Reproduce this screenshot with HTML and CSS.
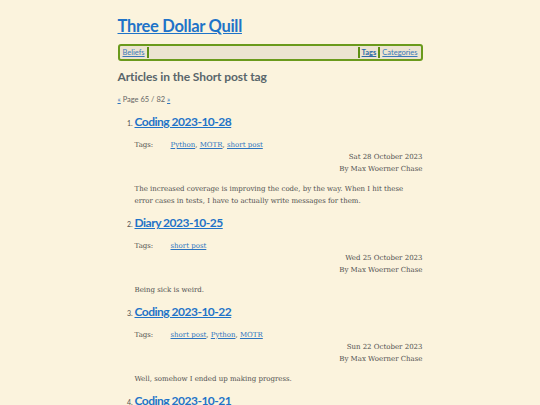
FILE: index.html
```html
<!DOCTYPE html>
<html>
<head>
<meta charset="utf-8">
<link rel="stylesheet" href="styles.css">
</head>
<body>
<div class="page">
  <header class="site-head">
    <h1 class="site-title"><a href="#">Three Dollar Quill</a></h1>
    <nav class="nav">
      <a href="#">Beliefs</a>
      <span class="sep"></span>
      <span class="spacer"></span>
      <span class="sep"></span>
      <a href="#" class="active">Tags</a>
      <span class="sep"></span>
      <a href="#">Categories</a>
    </nav>
  </header>
  <h2 class="page-heading">Articles in the Short post tag</h2>
  <p class="pager"><a href="#">«</a> Page 65 / 82 <a href="#">»</a></p>
  <ol class="articles">
    <li>
      <h3 class="entry-title"><a href="#">Coding 2023-10-28</a></h3>
      <div class="tags"><span class="tags-label">Tags:</span><span><a href="#">Python</a>, <a href="#">MOTR</a>, <a href="#">short post</a></span></div>
      <div class="meta">Sat 28 October 2023<br>By Max Woerner Chase</div>
      <p class="summary">The increased coverage is improving the code, by the way. When I hit these error cases in tests, I have to actually write messages for them.</p>
    </li>
    <li>
      <h3 class="entry-title"><a href="#">Diary 2023-10-25</a></h3>
      <div class="tags"><span class="tags-label">Tags:</span><span><a href="#">short post</a></span></div>
      <div class="meta">Wed 25 October 2023<br>By Max Woerner Chase</div>
      <p class="summary">Being sick is weird.</p>
    </li>
    <li>
      <h3 class="entry-title"><a href="#">Coding 2023-10-22</a></h3>
      <div class="tags"><span class="tags-label">Tags:</span><span><a href="#">short post</a>, <a href="#">Python</a>, <a href="#">MOTR</a></span></div>
      <div class="meta">Sun 22 October 2023<br>By Max Woerner Chase</div>
      <p class="summary">Well, somehow I ended up making progress.</p>
    </li>
    <li>
      <h3 class="entry-title"><a href="#">Coding 2023-10-21</a></h3>
      <div class="tags"><span class="tags-label">Tags:</span><span><a href="#">short post</a></span></div>
      <div class="meta">Sat 21 October 2023<br>By Max Woerner Chase</div>
      <p class="summary">More progress.</p>
    </li>
  </ol>
</div>
</body>
</html>
```
FILE: styles.css
```css
html, body {
  margin: 0;
  padding: 0;
  background: #fbf3dd;
}
body {
  font-family: "DejaVu Serif", serif;
  font-size: 7px;
  line-height: 12px;
  color: #505050;
}
a {
  color: #2d74bf;
}
.page {
  width: 305px;
  margin: 0 auto;
  padding-top: 14px;
}
.site-title {
  margin: 0;
  font-family: Lato, sans-serif;
  font-size: 16.5px;
  line-height: 24px;
  font-weight: 700;
  letter-spacing: -0.3px;
}
.site-title a {
  color: #1f73c8;
}
.nav {
  margin-top: 6px;
  display: flex;
  align-items: stretch;
  height: 13px;
  border: 2px solid #6a9a1c;
  border-radius: 3px;
  background: #ece4d1;
  font-family: Lato, sans-serif;
  font-size: 7.5px;
  line-height: 13px;
  padding: 0 2px;
}
.nav a {
  color: #3a78b8;
  padding: 0 1px;
}
.nav a.active {
  font-weight: 700;
  color: #2d6aa6;
}
.nav .sep {
  width: 2px;
  background: #5e8f14;
  margin: 1px 1px;
}
.nav .spacer {
  flex: 1;
}
.page-heading {
  margin: 7px 0 0;
  font-family: Lato, sans-serif;
  font-size: 12px;
  line-height: 18px;
  font-weight: 700;
  color: #59666b;
  letter-spacing: -0.1px;
}
.pager {
  margin: 9px 0 0;
  font-family: Lato, sans-serif;
  font-size: 7.5px;
  line-height: 10px;
  color: #666;
}
.articles {
  margin: 5px 0 0;
  padding-left: 17px;
}
.articles li {
  font-family: Lato, sans-serif;
  font-size: 7px;
  margin-bottom: 4px;
}
.entry-title {
  margin: 0;
  font-family: Lato, sans-serif;
  font-size: 12px;
  line-height: 24px;
  font-weight: 700;
  letter-spacing: -0.5px;
}
.entry-title a {
  color: #1f73c8;
}
.tags {
  margin-top: 5px;
  display: flex;
  font-family: "DejaVu Serif", serif;
  font-size: 7px;
  line-height: 12px;
}
.tags-label {
  width: 36px;
}
.meta {
  text-align: right;
  font-family: "DejaVu Serif", serif;
  font-size: 7px;
  line-height: 12px;
}
.summary {
  margin: 8px 0 0;
  font-family: "DejaVu Serif", serif;
  font-size: 7px;
  line-height: 12px;
}
```
